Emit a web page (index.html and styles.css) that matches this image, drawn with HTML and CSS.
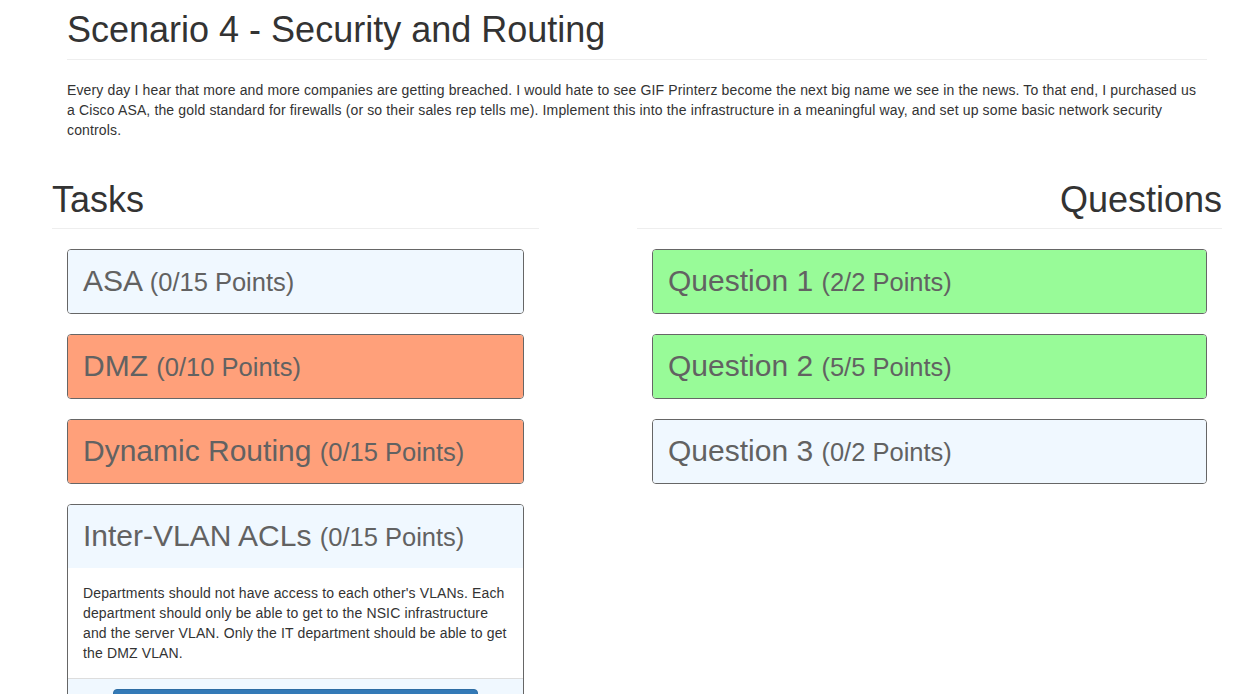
FILE: index.html
```html
<!DOCTYPE html>
<html lang="en">
<head>
<meta charset="utf-8">
<title>Scenario 4 - Security and Routing</title>
<link rel="stylesheet" href="styles.css">
</head>
<body>
<div class="container">
  <div class="intro">
    <div class="page-header">
      <h1>Scenario 4 - Security and Routing</h1>
    </div>
    <p class="lead-text">Every day I hear that more and more companies are getting breached. I would hate to see GIF Printerz become the next big name we see in the news. To that end, I purchased us a Cisco ASA, the gold standard for firewalls (or so their sales rep tells me). Implement this into the infrastructure in a meaningful way, and set up some basic network security controls.</p>
  </div>
  <div class="row">
    <div class="col col-tasks">
      <h2 class="col-header">Tasks</h2>
      <div class="panels">
        <div class="panel state-none">
          <div class="panel-heading">ASA <small>(0/15 Points)</small></div>
        </div>
        <div class="panel state-fail">
          <div class="panel-heading">DMZ <small>(0/10 Points)</small></div>
        </div>
        <div class="panel state-fail">
          <div class="panel-heading">Dynamic Routing <small>(0/15 Points)</small></div>
        </div>
        <div class="panel state-none">
          <div class="panel-heading">Inter-VLAN ACLs <small>(0/15 Points)</small></div>
          <div class="panel-body">Departments should not have access to each other's VLANs. Each department should only be able to get to the NSIC infrastructure and the server VLAN. Only the IT department should be able to get the DMZ VLAN.</div>
          <div class="panel-footer">
            <button class="btn" type="button">Submit</button>
          </div>
        </div>
      </div>
    </div>
    <div class="col col-questions">
      <h2 class="col-header right">Questions</h2>
      <div class="panels">
        <div class="panel state-pass">
          <div class="panel-heading">Question 1 <small>(2/2 Points)</small></div>
        </div>
        <div class="panel state-pass">
          <div class="panel-heading">Question 2 <small>(5/5 Points)</small></div>
        </div>
        <div class="panel state-none">
          <div class="panel-heading">Question 3 <small>(0/2 Points)</small></div>
        </div>
      </div>
    </div>
  </div>
</div>
</body>
</html>
```

FILE: styles.css
```css
html, body {
  margin: 0;
  padding: 0;
  background: #fff;
}
body {
  font-family: "Liberation Sans", Arial, sans-serif;
  font-size: 14px;
  line-height: 20px;
  color: #333;
  overflow-x: hidden;
}
.container {
  width: 1170px;
  margin-left: 52px;
}
.intro {
  padding: 0 15px 10px;
}
.page-header {
  padding-top: 10px;
  padding-bottom: 9px;
  border-bottom: 1px solid #eee;
}
.page-header h1 {
  margin: 0;
  font-size: 36px;
  line-height: 1.1;
  font-weight: 500;
  color: #333;
}
.lead-text {
  margin: 20px 0 0;
  letter-spacing: 0.14px;
}
.row {
  display: flex;
  justify-content: space-between;
  margin-top: 30px;
}
.col-tasks {
  width: 487px;
}
.col-questions {
  width: 585px;
}
.col-header {
  margin: 0 0 20px;
  padding-bottom: 9px;
  border-bottom: 1px solid #eee;
  font-size: 36px;
  line-height: 1.1;
  font-weight: 500;
  color: #333;
}
.col-header.right {
  text-align: right;
}
.panels {
  padding: 0 15px;
}
.panel {
  border: 1px solid #666;
  border-radius: 4px;
  margin-bottom: 20px;
  overflow: hidden;
  background: #fff;
}
.panel-heading {
  padding: 9px 15px 11px;
  font-size: 30px;
  line-height: 43px;
  height: 43px;
  color: #626262;
}
.panel-heading small {
  font-size: 85%;
  line-height: 1;
}
.state-none .panel-heading { background: aliceblue; }
.state-fail .panel-heading { background: lightsalmon; }
.state-pass .panel-heading { background: palegreen; }
.panel-body {
  padding: 15px;
  color: #333;
  letter-spacing: 0.14px;
}
.panel-footer {
  padding: 10px 15px;
  background: aliceblue;
  border-top: 1px solid #ddd;
}
.btn {
  display: block;
  width: 365px;
  margin: 0 auto;
  padding: 8px 12px;
  border: 1px solid #2e6da4;
  border-radius: 4px;
  background: #337ab7;
  color: #fff;
  font-family: "Liberation Sans", Arial, sans-serif;
  font-size: 14px;
  line-height: 20px;
}
```
